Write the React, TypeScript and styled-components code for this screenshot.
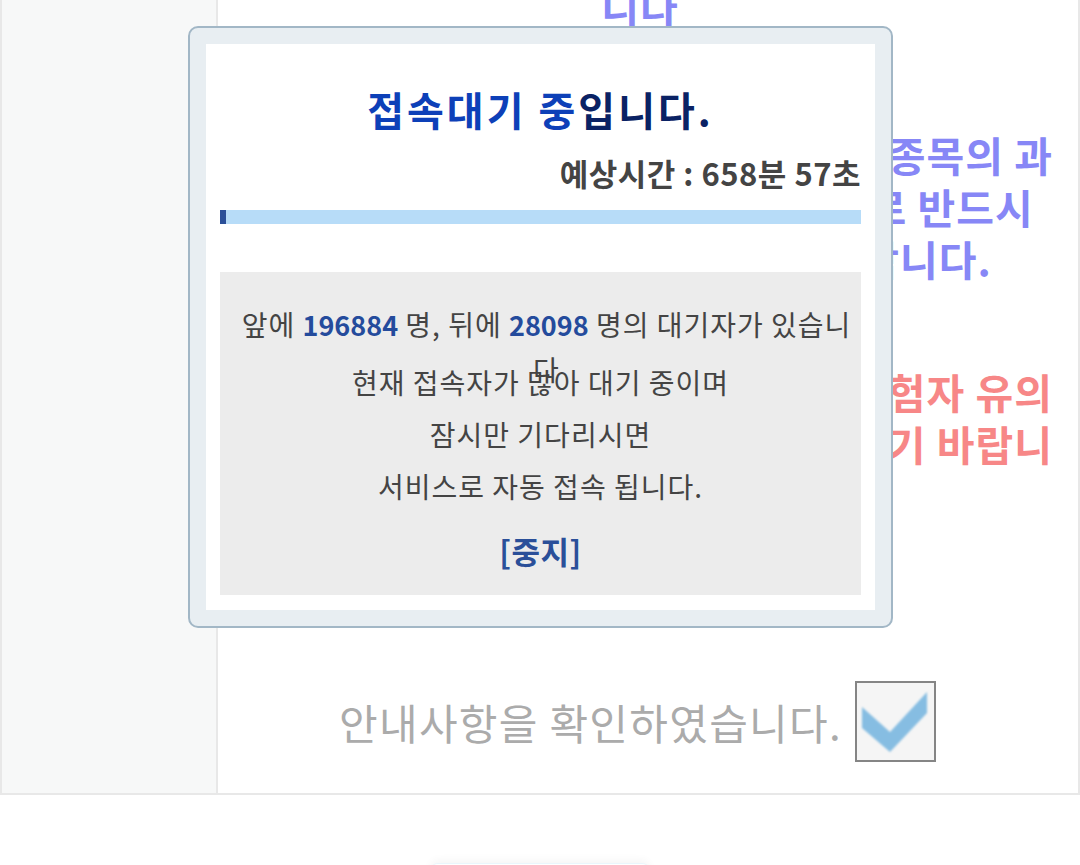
import { createGlobalStyle } from 'styled-components';
import styled from 'styled-components';

const GlobalStyle = createGlobalStyle`
  html, body {
    margin: 0;
    padding: 0;
    background: #ffffff;
    overflow: hidden;
  }

  body {
    font-family: "Noto Sans CJK KR", "Noto Sans", sans-serif;
  }
`;

const Page = styled.div`
  position: relative;
  width: 1080px;
  height: 865px;
  overflow: hidden;
`;

const NoticeTable = styled.section`
  display: grid;
  grid-template-columns: 216px 1fr;
  margin-top: -60px;
  border: 2px solid #e8e8e8;
  border-top: none;
`;

const SideCol = styled.div`
  background: #f7f8f8;
  border-right: 2px solid #e8e8e8;
`;

const ContentCol = styled.div`
  display: flex;
  flex-direction: column;
  align-items: center;
  padding: 40px 16px 31px 0;
  text-align: center;
`;

const Notice = styled.p<{ $color: string; $gap: number }>`
  margin: ${({ $gap }) => $gap}px 0 0;
  font-size: 41px;
  font-weight: 700;
  line-height: 52px;
  letter-spacing: 1px;
  color: ${({ $color }) => $color};
  white-space: nowrap;
`;

const ConfirmRow = styled.label`
  display: flex;
  align-items: center;
  gap: 13px;
  margin-top: 160px;
  padding-right: 5px;
`;

const ConfirmText = styled.span`
  font-size: 42px;
  line-height: 52px;
  letter-spacing: 1.3px;
  color: #ababab;
`;

const CheckBox = styled.span`
  width: 81px;
  height: 81px;
  box-sizing: border-box;
  border: 2px solid #858585;
  background: #f5f5f5;
  display: flex;
`;

const ButtonArea = styled.div`
  display: flex;
  justify-content: center;
  padding-top: 68px;
`;

const NextButton = styled.button`
  width: 220px;
  height: 56px;
  border: none;
  border-top: 1px solid #eaf6fc;
  border-radius: 8px;
  background: #ffffff;
  box-shadow: 0 -3px 8px rgba(0, 0, 0, 0.04);
`;

/* 대기열 팝업 */
const WaitPopup = styled.div`
  position: absolute;
  top: 26px;
  left: 188px;
  width: 705px;
  height: 602px;
  box-sizing: border-box;
  padding: 16px;
  border: 2px solid #a2b7c6;
  border-radius: 10px;
  background: #e8eef2;
`;

const PopupBody = styled.div`
  height: 100%;
  box-sizing: border-box;
  display: flex;
  flex-direction: column;
  padding: 42px 14px 15px;
  background: #ffffff;
`;

const Title = styled.h2`
  margin: 0;
  font-size: 40px;
  font-weight: 700;
  line-height: 46px;
  letter-spacing: 3px;
  text-align: center;
  color: #0d40b8;

  span {
    color: #0a2264;
  }
`;

const EstTime = styled.p`
  margin: 23px 0 0;
  font-size: 31px;
  font-weight: 700;
  line-height: 36px;
  letter-spacing: 0.5px;
  text-align: right;
  color: #444444;
`;

const ProgressBar = styled.div`
  height: 14px;
  margin-top: 19px;
  background: #b7dcf8;
  display: flex;
`;

const ProgressFill = styled.div`
  background: #2b4f98;
`;

const InfoBox = styled.div`
  flex: 1;
  margin-top: 48px;
  padding-top: 30px;
  background: #ececec;
  text-align: center;
  font-size: 28px;
  letter-spacing: 1px;
  color: #444444;
`;

const QueueLine = styled.div`
  height: 54px;
  padding-left: 12px;
  line-height: 45px;
  white-space: nowrap;
`;

const Count = styled.b`
  font-size: 27px;
  letter-spacing: 0;
  color: #244b9c;
`;

const InfoLines = styled.p`
  margin: 0;
  line-height: 52px;
`;

const StopLink = styled.a`
  display: block;
  margin-top: 19px;
  font-size: 31px;
  font-weight: 700;
  line-height: 40px;
  letter-spacing: 0.5px;
  color: #2a4f99;
  text-decoration: none;
`;

const CheckMark = () => (
  <svg width="77" height="77" viewBox="0 0 77 77">
    <defs>
      <filter id="soft" x="-10%" y="-10%" width="120%" height="120%">
        <feGaussianBlur stdDeviation="0.9" />
      </filter>
    </defs>
    <polygon
      points="5,24 33,49 70,9 70,30 33,69 5,45"
      fill="#86bde2"
      filter="url(#soft)"
    />
  </svg>
);

const App = () => {
  const progress = 1;

  return (
    <>
      <GlobalStyle />
      <Page>
        <NoticeTable>
          <SideCol />
          <ContentCol>
            <Notice $color="#8787f6" $gap={0}>
              니다
            </Notice>
            <Notice $color="#8787f6" $gap={96}>
              시험에 응시하고자하는 해당 국가자격 종목의 과
              <br />
              목별 시험일정을 확인하신 후 수험표로 반드시
              <br />
              지참하시고 시험장에 입실하셔야 합니다.
            </Notice>
            <Notice $color="#f78787" $gap={81}>
              세부 사항은 홈페이지 공지사항에서 수험자 유의
              <br />
              사항을 확인하여 불이익이 없도록 하시기 바랍니
              <br />
              다.
            </Notice>
            <ConfirmRow>
              <ConfirmText>안내사항을 확인하였습니다.</ConfirmText>
              <CheckBox>
                <CheckMark />
              </CheckBox>
            </ConfirmRow>
          </ContentCol>
        </NoticeTable>

        <ButtonArea>
          <NextButton />
        </ButtonArea>

        <WaitPopup>
          <PopupBody>
            <Title>
              접속대기 중<span>입니다.</span>
            </Title>
            <EstTime>예상시간 : 658분 57초</EstTime>
            <ProgressBar>
              <ProgressFill style={{ width: `${progress}%` }} />
            </ProgressBar>
            <InfoBox>
              <QueueLine>
                앞에 <Count>196884</Count> 명, 뒤에 <Count>28098</Count> 명의 대기자가 있습니
                <br />
                다
              </QueueLine>
              <InfoLines>
                현재 접속자가 많아 대기 중이며
                <br />
                잠시만 기다리시면
                <br />
                서비스로 자동 접속 됩니다.
              </InfoLines>
              <StopLink href="#">[중지]</StopLink>
            </InfoBox>
          </PopupBody>
        </WaitPopup>
      </Page>
    </>
  );
};

export default App;
